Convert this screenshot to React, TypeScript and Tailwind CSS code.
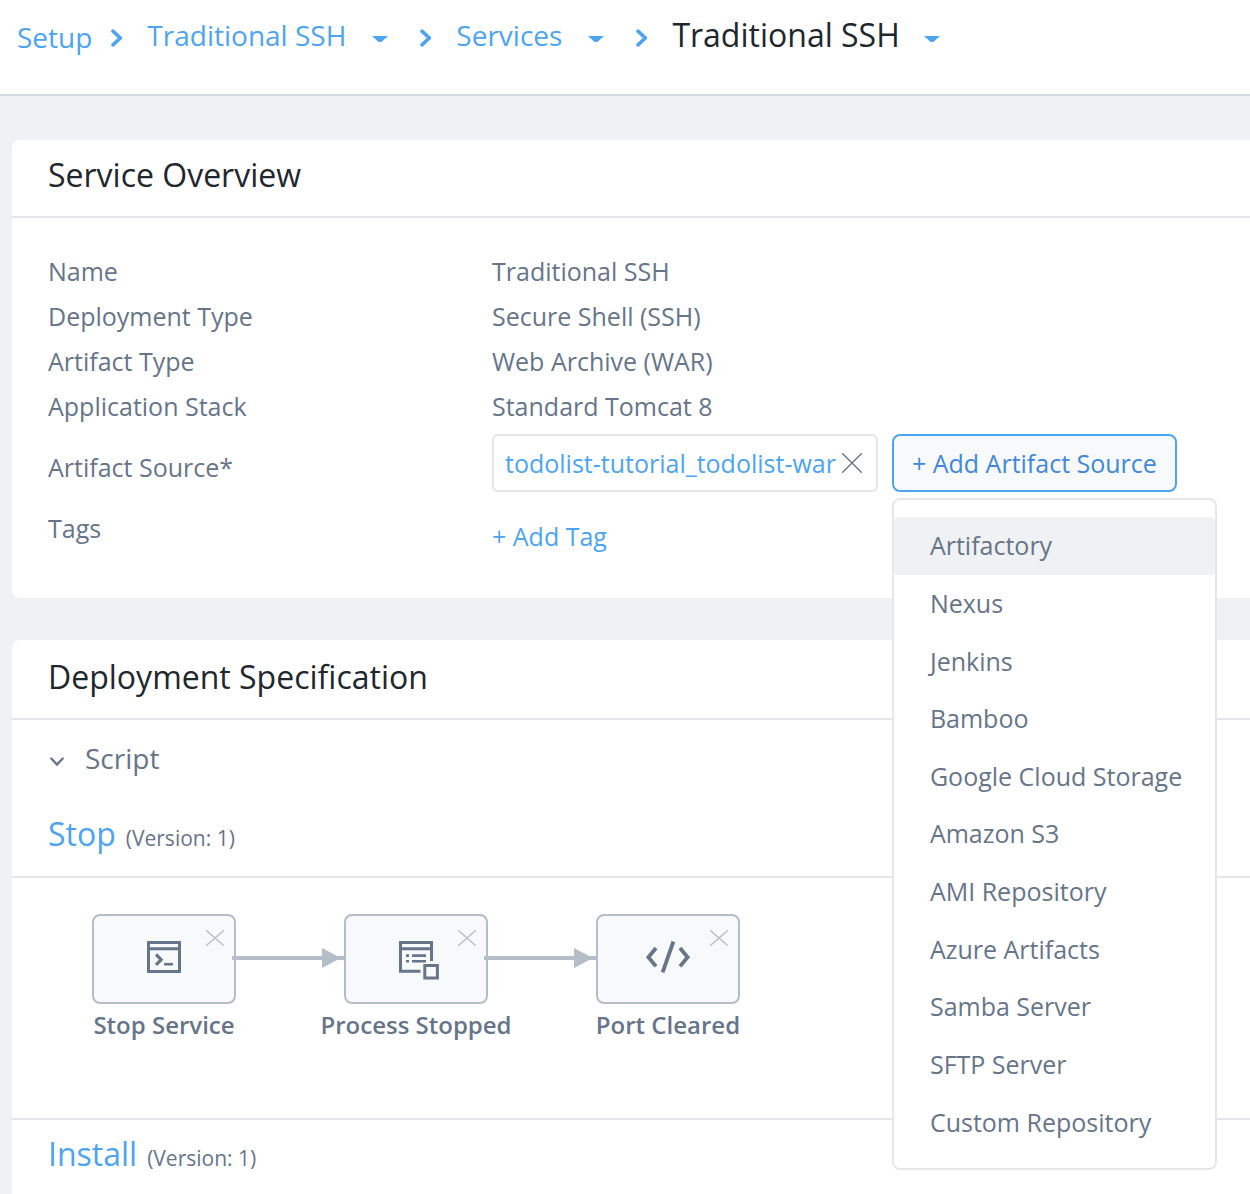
import React from "react";

const overview = [
  ["Name", "Traditional SSH"],
  ["Deployment Type", "Secure Shell (SSH)"],
  ["Artifact Type", "Web Archive (WAR)"],
  ["Application Stack", "Standard Tomcat 8"],
];

const sources = [
  "Artifactory",
  "Nexus",
  "Jenkins",
  "Bamboo",
  "Google Cloud Storage",
  "Amazon S3",
  "AMI Repository",
  "Azure Artifacts",
  "Samba Server",
  "SFTP Server",
  "Custom Repository",
];

function ChevronRight() {
  return (
    <svg aria-hidden="true" className="mt-1.5 h-[18px] w-3 shrink-0" viewBox="0 0 12 18" fill="none" stroke="#4da4f2" strokeWidth="3.6" strokeLinecap="round" strokeLinejoin="round">
      <path d="M2 2.2 9.4 9 2 15.8" />
    </svg>
  );
}

function CaretButton({ label }: { label: string }) {
  return (
    <button type="button" aria-label={label} className="mt-2 flex shrink-0">
      <svg aria-hidden="true" className="h-1.5 w-4" viewBox="0 0 16 6" fill="#4da4f2">
        <path d="M0 0h16l-6 5.6q-.5.4-1.2.4H7.2q-.7 0-1.2-.4Z" />
      </svg>
    </button>
  );
}

function TerminalIcon() {
  return (
    <svg aria-hidden="true" className="h-10 w-12" viewBox="0 0 48 40" fill="none" stroke="#66758a" strokeWidth="3">
      <path d="M8.5 3.5h31v29h-31zM8.5 9.8h31" />
      <path d="m16 15.5 5.2 5.2-5.2 5.2" strokeWidth="3.2" />
      <path d="M24 25.2h9" strokeWidth="2.6" />
    </svg>
  );
}

function ProcessIcon() {
  return (
    <svg aria-hidden="true" className="h-10 w-12 overflow-visible" viewBox="0 0 48 40" fill="none" stroke="#66758a" strokeWidth="3">
      <path d="M28.5 32.2h-20V3.5h31V22M8.5 9.8h31" />
      <path d="M14 16.6h3M20 16.6h14M14 22.3h3M20 22.3h14" strokeWidth="2.6" />
      <path d="M32.8 26.5h12.6V39H32.8z" />
    </svg>
  );
}

function CodeIcon() {
  return (
    <svg aria-hidden="true" className="h-10 w-12" viewBox="0 0 48 40" fill="none" stroke="#66758a" strokeWidth="3.8">
      <path d="M12 9 4.4 18.2 12 27.4M36 9l7.6 9.2-7.6 9.2M29.4 2.5 18.6 33.3" />
    </svg>
  );
}

function Connector() {
  return (
    <svg aria-hidden="true" className="relative -mx-1 mt-[34px] h-5 min-w-0 flex-1" viewBox="0 0 116 20">
      <path d="M0 8h114v4H0zM90 0l19 10-19 10z" fill="#b5bdc9" />
    </svg>
  );
}

function Step({ label, icon }: { label: string; icon: React.ReactNode }) {
  return (
    <li className="flex w-36 shrink-0 flex-col items-center">
      <div className="relative flex h-[90px] w-36 items-center justify-center rounded-lg border-2 border-[#b5bdca] bg-[#f8f9fb]">
        {icon}
        <button type="button" aria-label={`Remove ${label}`} className="absolute top-3.5 right-2.5">
          <svg aria-hidden="true" className="h-4 w-[18px]" viewBox="0 0 18 16" fill="none" stroke="#b5bdca" strokeWidth="1.4" strokeLinecap="round">
            <path d="m.7.7 16.6 14.6M17.3.7.7 15.3" />
          </svg>
        </button>
      </div>
      <span className="text-[24px] leading-[42px] font-semibold whitespace-nowrap">{label}</span>
    </li>
  );
}

function PhaseTitle({ name }: { name: string }) {
  return (
    <div className="flex items-baseline gap-2.5 px-9 text-[32px] leading-[68px]">
      <a href={`#${name.toLowerCase()}`} className="text-[#4da4f2]">{name}</a>
      <span className="text-[21px] leading-none">(Version: 1)</span>
    </div>
  );
}

export default function App() {
  return (
    <div className="flex min-h-screen flex-col overflow-x-hidden bg-[#f0f1f3] font-['Open_Sans',sans-serif] text-[25px] text-[#66758a]">
      <header className="border-b-2 border-[#d5dade] bg-white">
        <nav aria-label="Breadcrumb" className="flex h-[94px] items-center pr-4 pb-6 pl-[17px] text-[28px] whitespace-nowrap text-[#4da4f2]">
          <a href="#setup" className="mt-1 mr-[19px]">Setup</a>
          <ChevronRight />
          <a href="#application" className="mr-[26px] ml-6">Traditional SSH</a>
          <CaretButton label="Switch application" />
          <span className="w-8 shrink-0" />
          <ChevronRight />
          <a href="#services" className="mr-[26px] ml-6">Services</a>
          <CaretButton label="Switch section" />
          <span className="w-8 shrink-0" />
          <ChevronRight />
          <h1 className="mr-6 ml-6 text-[32px] text-[#22272e]">Traditional SSH</h1>
          <CaretButton label="Switch service" />
        </nav>
      </header>

      <main className="flex flex-1 flex-col gap-[42px] pt-11 pl-3">
        <section className="rounded-l-lg bg-white">
          <h2 className="border-b-2 border-[#e4e5ea] px-9 pt-px pb-[7px] text-[32px] leading-[68px] text-[#22272e]">Service Overview</h2>
          <dl className="grid grid-cols-[444px_1fr] px-9 pt-[31px] pb-[39px] leading-[45px] whitespace-nowrap">
            {overview.map(([k, v]) => (
              <React.Fragment key={k}>
                <dt>{k}</dt>
                <dd>{v}</dd>
              </React.Fragment>
            ))}
            <dt className="pt-4">Artifact Source*</dt>
            <dd className="flex gap-3.5 pt-[5px]">
              <div className="flex h-[58px] items-center gap-1.5 rounded-md border-2 border-[#e4e5ea] pr-3.5 pl-[11px]">
                <a href="#artifact" className="text-[#4da4f2]">todolist-tutorial_todolist-war</a>
                <button type="button" aria-label="Remove artifact source">
                  <svg aria-hidden="true" className="size-5" viewBox="0 0 20 20" fill="none" stroke="#66758a" strokeWidth="1.4" strokeLinecap="round">
                    <path d="m.7.7 18.6 18.6M19.3.7.7 19.3" />
                  </svg>
                </button>
              </div>
              <div className="relative">
                <button type="button" aria-haspopup="menu" aria-expanded="true" className="flex h-[58px] items-center rounded-lg border-2 border-[#4da4f2] bg-[#f8f9fb] px-[18px] text-[#3f88dc]">
                  + Add Artifact Source
                </button>
                <ul role="menu" className="absolute top-16 left-0 z-10 grid h-[672px] w-[325px] auto-rows-fr rounded-lg border-2 border-[#e6e7eb] bg-white py-[17px]">
                  {sources.map((s, i) => (
                    <li key={s} role="none" className="flex">
                      <button
                        type="button"
                        role="menuitem"
                        className={i === 0 ? "w-full rounded bg-[#f0f1f3] pl-9 text-left" : "w-full pl-9 text-left"}
                      >
                        {s}
                      </button>
                    </li>
                  ))}
                </ul>
              </div>
            </dd>
            <dt className="pt-3.5">Tags</dt>
            <dd className="pt-[22px]">
              <button type="button" className="text-[#4da4f2]">+ Add Tag</button>
            </dd>
          </dl>
        </section>

        <section className="flex-1 rounded-tl-lg bg-white">
          <h2 className="border-b-2 border-[#e4e5ea] px-9 pt-[3px] pb-[7px] text-[32px] leading-[68px] text-[#22272e]">Deployment Specification</h2>
          <button type="button" aria-expanded="true" className="flex h-[78px] items-center gap-[21px] px-9 pb-0.5 text-[28px]">
            <svg aria-hidden="true" className="mt-2 ml-0.5 h-2.5 w-3.5" viewBox="0 0 14 10" fill="none" stroke="#66758a" strokeWidth="2.4" strokeLinecap="round">
              <path d="m1.3 1.5 5.7 6 5.7-6" />
            </svg>
            Script
          </button>
          <div className="border-b-2 border-[#e4e5ea] pt-0.5 pb-2">
            <PhaseTitle name="Stop" />
          </div>
          <ol className="flex h-[242px] w-[728px] items-start pt-9 pl-20">
            <Step label="Stop Service" icon={<TerminalIcon />} />
            <Connector />
            <Step label="Process Stopped" icon={<ProcessIcon />} />
            <Connector />
            <Step label="Port Cleared" icon={<CodeIcon />} />
          </ol>
          <div className="-mt-0.5 border-t-2 border-[#e4e5ea]">
            <PhaseTitle name="Install" />
          </div>
        </section>
      </main>
    </div>
  );
}
